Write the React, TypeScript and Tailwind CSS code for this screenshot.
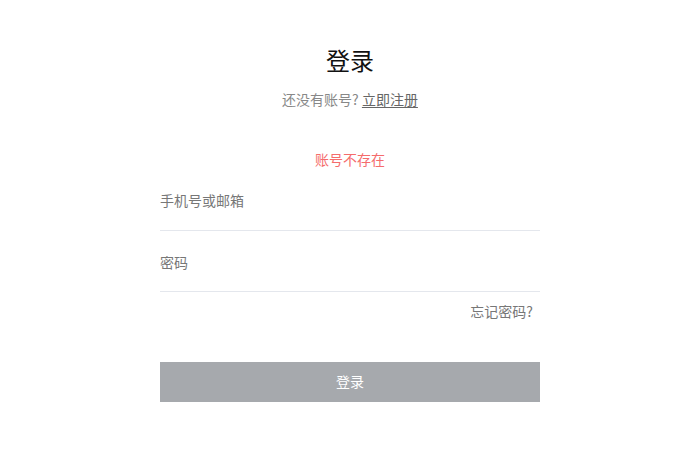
import { useState } from 'react';

export default function App() {
  const [account, setAccount] = useState('');
  const [password, setPassword] = useState('');

  return (
    <div
      className="min-h-screen bg-white"
      style={{ fontFamily: '"Noto Sans CJK SC", "Noto Sans", sans-serif' }}
    >
      <div className="mx-auto w-[380px] pt-[44px] flex flex-col">
        {/* 标题 */}
        <h1 className="text-center text-[24px] leading-[32px] text-[#111]">登录</h1>
        <p className="mt-[13px] text-center text-[14px] leading-[20px] text-[#888]">
          还没有账号?{' '}
          <a href="#" className="text-[#666] underline underline-offset-2">
            立即注册
          </a>
        </p>

        {/* 错误提示 */}
        <p className="mt-[40px] text-center text-[14px] leading-[20px] text-[#f56c6c]">账号不存在</p>

        {/* 表单 */}
        <div className="mt-[12px] pb-[11px] border-b border-[#e4e7ed]">
          <input
            value={account}
            onChange={(e) => setAccount(e.target.value)}
            placeholder="手机号或邮箱"
            className="block w-full h-[38px] text-[14px] outline-none placeholder:text-[#777] text-[#333]"
          />
        </div>
        <div className="mt-[11px] pb-[10px] border-b border-[#e4e7ed]">
          <input
            type="password"
            value={password}
            onChange={(e) => setPassword(e.target.value)}
            placeholder="密码"
            className="block w-full h-[39px] text-[14px] outline-none placeholder:text-[#777] text-[#333]"
          />
        </div>

        <div className="mt-[9px] flex justify-end pr-[7px]">
          <a href="#" className="text-[14px] leading-[20px] text-[#777]">
            忘记密码?
          </a>
        </div>

        <button className="mt-[41px] h-[40px] w-full bg-[#a6a9ad] text-[14px] leading-[38px] pb-[2px] text-white">
          登录
        </button>
      </div>
    </div>
  );
}
